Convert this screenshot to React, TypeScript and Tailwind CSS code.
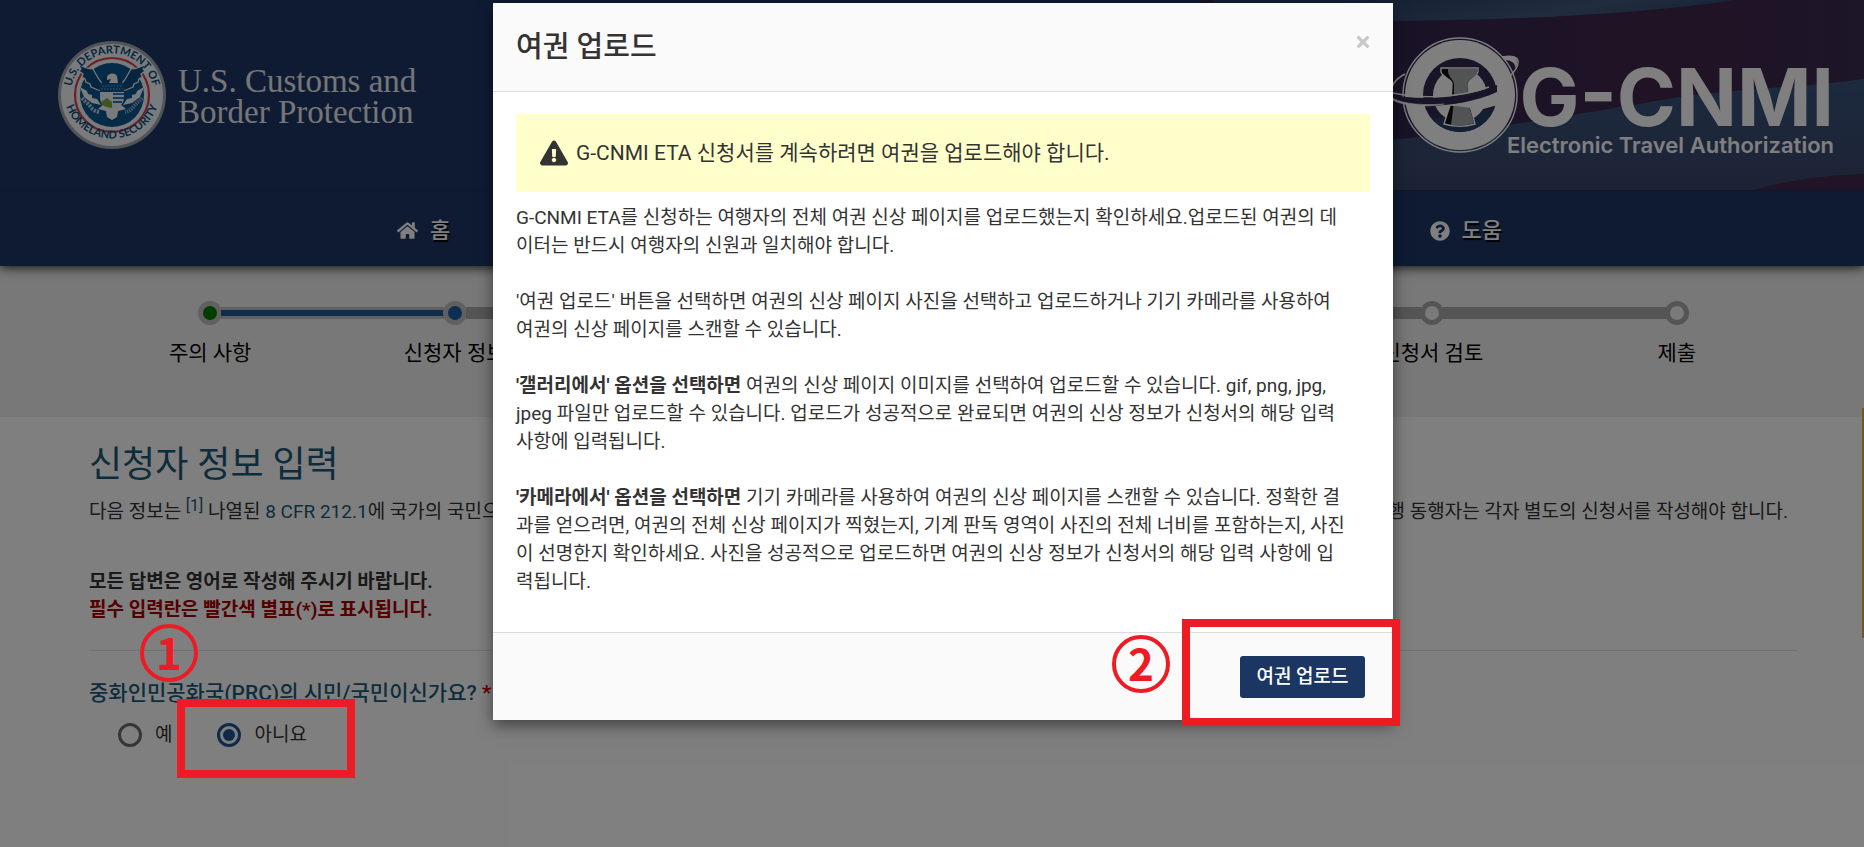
import { FC, ReactNode } from 'react'
import { FaExclamationTriangle, FaHome, FaQuestionCircle, FaTimes } from 'react-icons/fa'

const steps = [
  { label: '주의 사항', state: 'done' },
  { label: '신청자 정보', state: 'current' },
  { label: '', state: 'todo' },
  { label: '', state: 'todo' },
  { label: '', state: 'todo' },
  { label: '신청서 검토', state: 'todo' },
  { label: '제출', state: 'todo' },
]

const dotColor: Record<string, string> = {
  done: 'border-[#c0c0c0] bg-[#007c00]',
  current: 'border-[#c0c0c0] bg-[#1c5fa6]',
  todo: 'border-[#aaaaaa] bg-[#f4f4f4]',
}

const Seal: FC = () => (
  <svg viewBox="0 0 108 108" className="size-[108px] shrink-0" role="img" aria-label="Department of Homeland Security">
    <defs>
      <path id="sealTop" d="M13.5 63A41.5 41.5 0 1 1 94.5 63" />
      <path id="sealBottom" d="M5.5 49a48.5 48.5 0 0 0 97 0" />
    </defs>
    <circle cx="54" cy="54" r="54" fill="#a3a9b2" />
    <circle cx="54" cy="54" r="51" fill="#f4f6f8" />
    <circle cx="54" cy="54" r="37" fill="#f4f6f8" stroke="#d8404c" strokeWidth="2.2" />
    <circle cx="54" cy="54" r="32" fill="#0a5690" />
    {/* tail and laurel */}
    <path d="M22 46l7 4 1 3 4 1 0 3 5 1 4 6-9-2-8-6zM86 46l-7 4-1 3-4 1 0 3-5 1-4 6 9-2 8-6z" fill="#f4f6f8" />
    <path d="M24 57c3 4 6 5 8 8s4 5 9 6" fill="none" stroke="#b9cfe0" strokeWidth="4" strokeDasharray="2.2 1.2" />
    <path d="M84 57c-3 4-6 5-8 8s-4 5-9 6" fill="none" stroke="#8fb0ca" strokeWidth="4" strokeDasharray="1.4 1" />
    <path d="M40 68l14-12 14 12-8 2-1 6-5 3-5-3-1-6z" fill="#f4f6f8" />
    {/* eagle wings */}
    <path
      d="M20 23c5 3 10 5 15 5 3 5 5 10 8 13l3 9-6-1-7-3-1-3-4-2-1-3-3-2 1-3-4-3 2-2z M88 23c-5 3-10 5-15 5-3 5-5 10-8 13l-3 9 6-1 7-3 1-3 4-2 1-3 3-2-1-3 4-3-2-2z"
      fill="#0a4a80"
      stroke="#f4f6f8"
      strokeWidth="1.2"
    />
    <path d="M42 50l4-14h16l4 14z" fill="#0a4a80" />
    <path d="M49 37c0-5 8-6 10-2l1 7h-9l2-4-4 1z" fill="#f4f6f8" />
    {/* shield */}
    <path d="M42 48h24v8c0 7-5 11-12 13-7-2-12-6-12-13z" fill="#eef3f7" />
    <path d="M42 42h24v9H42z" fill="#0a5690" />
    <path d="M44 45h20M43 48h22" stroke="#7fa9ca" strokeWidth="1.2" strokeDasharray="1.5 1.5" />
    <path d="M55 53h11M55 57h11M55 61h9" stroke="#2b79b4" strokeWidth="2" />
    <path d="M43 61l6-4 5 4v6c-6-1-10-2-11-6z" fill="#7fa83c" />
    <g fill="#0c4f80" fontFamily="Lato, sans-serif" fontWeight="700" fontSize="11" textAnchor="middle">
      <text>
        <textPath href="#sealTop" startOffset="50%">
          U.S. DEPARTMENT OF
        </textPath>
      </text>
      <text>
        <textPath href="#sealBottom" startOffset="50%">
          HOMELAND SECURITY
        </textPath>
      </text>
    </g>
  </svg>
)

const LatteLogo: FC = () => (
  <svg viewBox="0 0 136 116" className="h-[116px] w-[136px] shrink-0" aria-hidden="true">
    {/* orbit behind the globe */}
    <path d="M115 20c10-2 17 0 16 6 0 5-4 9-8 13" fill="none" stroke="#fff" strokeWidth="1.4" />
    <path d="M115 20c9-2 16-1 15 7 0 2-1 3-2 4 1-5-4-8-11-8z" fill="#fff" />
    <path d="M18 37C8 42 2 51 4 58" fill="none" stroke="#fff" strokeWidth="1.8" />
    <circle cx="73" cy="58" r="57" fill="none" stroke="#fff" strokeWidth="1.4" />
    <circle cx="73" cy="58" r="55" fill="#fff" />
    <circle cx="73" cy="58" r="37" fill="#33284f" />
    <path d="M45 82c16-2 40-8 61-10-5 14-18 23-33 23-11 0-21-5-28-13z" fill="#264168" />
    <circle cx="73" cy="58" r="27" fill="#fff" />
    {/* latte stone */}
    <path d="M54 31h37v4c-2 6-9 7-10 12l1 18 6 22c-10 3-20 3-31 0l7-22 1-18c0-5-9-6-11-12z" fill="#111" stroke="#fff" strokeWidth="1.4" />
    <path d="M61 32h29v4c-2 5-9 6-10 11l1 18 6 21c-8 3-16 3-23 2l3-23V47c0-4-7-8-6-15z" fill="#a4a7aa" />
    {/* crossbar and ring in front */}
    <path d="M58 66c20 0 38-4 52-12l1 14-15 4c-13 0-24-4-38-3z" fill="#fff" />
    <path d="M3 57c24 7 74 5 107-9v7C76 70 30 73 4 62z" fill="#33284f" />
    <path d="M6 56c26 6 66 5 96-6" fill="none" stroke="#fff" strokeWidth="1.4" />
    <path d="M1 57c6 9 30 12 56 10-20 4-48 2-56-8z" fill="#fff" stroke="#fff" strokeWidth="0.6" />
  </svg>
)

const FlagBackdrop: FC = () => (
  <svg viewBox="0 0 664 190" preserveAspectRatio="none" className="absolute right-0 top-0 h-full w-[664px]" aria-hidden="true">
    <defs>
      <linearGradient id="wave" x1="0" y1="0" x2="1" y2="0.2">
        <stop offset="0.25" stopColor="#2a3f66" />
        <stop offset="0.75" stopColor="#42597c" />
        <stop offset="1" stopColor="#304a72" />
      </linearGradient>
      <linearGradient id="stripe" x1="0" y1="0" x2="1" y2="0">
        <stop offset="0.3" stopColor="#33264f" />
        <stop offset="0.7" stopColor="#42264b" />
        <stop offset="1" stopColor="#3a2b50" />
      </linearGradient>
      <linearGradient id="fold" x1="0" y1="0" x2="0" y2="1">
        <stop offset="0" stopColor="#38557e" />
        <stop offset="1" stopColor="#3b466a" />
      </linearGradient>
    </defs>
    <path d="M0 0h664v190H0z" fill="url(#stripe)" />
    <path d="M12 0h523C440 14 320 20 193 21L20 14z" fill="url(#wave)" />
    <path d="M664 79C600 88 540 88 480 97c-60 10-170 30-287 43v50h471z" fill="url(#fold)" />
    <path d="M664 174c-40 1-80 7-110 16h110z" fill="#42284c" />
  </svg>
)

const Header: FC = () => (
  <header className="relative z-10 bg-[#1d3766] text-white shadow-[0_2px_10px_rgba(0,0,0,0.8)]">
    <div className="relative flex h-[191px] items-center justify-between border-b border-[#1a315c] pl-[58px] pr-[30px]">
      <FlagBackdrop />
      <a href="#" className="relative flex items-center gap-3">
        <Seal />
        <span className="flex flex-col pt-1 font-['Liberation_Serif',serif] text-[33px] leading-[31px] text-[#e9ecf1]">
          <span>U.S. Customs and</span>
          <span>Border Protection</span>
        </span>
      </a>
      <a href="#" className="relative flex items-center">
        <LatteLogo />
        <span className="-ml-4 flex flex-col items-end pt-7 font-[Inter,sans-serif]">
          <span className="text-[80px] font-bold leading-[72px]">G-CNMI</span>
          <span className="text-[22px] font-semibold leading-6">Electronic Travel Authorization</span>
        </span>
      </a>
    </div>
    <nav className="flex h-[75px] items-center justify-between pl-[397px] pr-[362px] pt-1 text-[22px] font-medium [text-shadow:1px_2px_1px_#000]">
      <a href="#" className="flex items-center gap-3">
        <FaHome className="size-[21px]" />홈
      </a>
      <a href="#" className="flex items-center gap-3">
        <FaQuestionCircle className="size-5" />
        도움
      </a>
    </nav>
  </header>
)

const Stepper: FC = () => (
  <ol className="grid h-[151px] grid-cols-7 bg-[#f0f0f0] pl-[88px] pr-[65px] pt-[35px]">
    {steps.map((step, i) => (
      <li key={i} className="flex flex-col items-center gap-3">
        <div className="flex w-full items-center">
          <div className={i === 0 ? 'h-3 flex-1' : i === 1 ? 'h-3 flex-1 border-y-[3px] border-[#c0c0c0] bg-[#1f5c9c]' : 'h-3 flex-1 bg-[#aaaaaa]'} />
          <div className={`-mx-px size-6 rounded-full border-[5px] ${dotColor[step.state]}`} />
          <div className={i === 6 ? 'h-3 flex-1' : i === 0 ? 'h-3 flex-1 border-y-[3px] border-[#c0c0c0] bg-[#1f5c9c]' : 'h-3 flex-1 bg-[#aaaaaa]'} />
        </div>
        <span className="text-[21px] leading-8 text-black">{step.label}</span>
      </li>
    ))}
  </ol>
)

interface RadioProps {
  label: string
  checked?: boolean
}

const Radio: FC<RadioProps> = ({ label, checked }) => (
  <label className="flex items-center gap-[13px]">
    <input
      type="radio"
      name="prc"
      defaultChecked={checked}
      className="size-6 appearance-none rounded-full border-[3px] border-[#6c6c6c] bg-clip-content p-[3px] checked:border-[#205493] checked:bg-[#205493]"
    />
    {label}
  </label>
)

const ApplicantForm: FC = () => (
  <main className="flex flex-col pl-[89px] pr-[66px] pt-[23px] text-[19px] leading-7 text-[#333]">
    <h1 className="text-[36px] leading-[50px] text-[#1b5b78]">신청자 정보 입력</h1>
    <p className="mt-2 flex justify-between whitespace-nowrap pr-[10px]">
      <span>
        다음 정보는{' '}
        <a href="#" className="align-super text-[16px] leading-none text-[#1b5b78]">
          [1]
        </a>{' '}
        나열된{' '}
        <a href="#" className="text-[#1b5b78]">
          8 CFR 212.1
        </a>
        에 국가의 국민으로
      </span>
      <span>여행 동행자는 각자 별도의 신청서를 작성해야 합니다.</span>
    </p>
    <p className="mt-[42px] font-bold">
      모든 답변은 영어로 작성해 주시기 바랍니다.
      <br />
      <span className="text-[#a80000]">필수 입력란은 빨간색 별표(*)로 표시됩니다.</span>
    </p>
    <hr className="mt-[26px] border-[#e4e4e4]" />
    <fieldset className="mt-7">
      <legend className="text-[21px] font-medium text-[#1b5b78]">
        중화인민공화국(PRC)의 시민/국민이신가요? <span className="text-[#d00000]">*</span>
      </legend>
      <div className="mt-[14px] flex gap-[45px] pl-[29px]">
        <Radio label="예" />
        <Radio label="아니요" checked />
      </div>
    </fieldset>
  </main>
)

const UploadDialog: FC = () => (
  <section
    role="dialog"
    aria-labelledby="uploadTitle"
    className="flex w-[900px] flex-col bg-white text-[19px] leading-7 text-[#333] shadow-[0_5px_15px_rgba(0,0,0,0.5)]"
  >
    <div className="flex h-[89px] items-start justify-between border-b border-[#dcdcdc] bg-[#fafafa] pl-[23px] pr-[21px]">
      <h2 id="uploadTitle" className="mt-6 text-[29px] font-medium leading-10">
        여권 업로드
      </h2>
      <button type="button" aria-label="닫기" className="mt-[30px] text-[#c8c8c8]">
        <FaTimes className="size-[18px]" />
      </button>
    </div>
    <div className="flex flex-col px-[23px] pb-9 pt-[22px]">
      <div className="flex h-[78px] items-center gap-2 bg-[#ffffcc] px-6 text-[21px]">
        <FaExclamationTriangle className="size-[28px]" />
        G-CNMI ETA 신청서를 계속하려면 여권을 업로드해야 합니다.
      </div>
      <div className="mt-3 flex flex-col gap-7 whitespace-nowrap">
        <p>
          G-CNMI ETA를 신청하는 여행자의 전체 여권 신상 페이지를 업로드했는지 확인하세요.업로드된 여권의 데
          <br />
          이터는 반드시 여행자의 신원과 일치해야 합니다.
        </p>
        <p>
          '여권 업로드' 버튼을 선택하면 여권의 신상 페이지 사진을 선택하고 업로드하거나 기기 카메라를 사용하여
          <br />
          여권의 신상 페이지를 스캔할 수 있습니다.
        </p>
        <p>
          <b>'갤러리에서' 옵션을 선택하면</b> 여권의 신상 페이지 이미지를 선택하여 업로드할 수 있습니다. gif, png, jpg,
          <br />
          jpeg 파일만 업로드할 수 있습니다. 업로드가 성공적으로 완료되면 여권의 신상 정보가 신청서의 해당 입력
          <br />
          사항에 입력됩니다.
        </p>
        <p>
          <b>'카메라에서' 옵션을 선택하면</b> 기기 카메라를 사용하여 여권의 신상 페이지를 스캔할 수 있습니다. 정확한 결
          <br />
          과를 얻으려면, 여권의 전체 신상 페이지가 찍혔는지, 기계 판독 영역이 사진의 전체 너비를 포함하는지, 사진
          <br />
          이 선명한지 확인하세요. 사진을 성공적으로 업로드하면 여권의 신상 정보가 신청서의 해당 입력 사항에 입
          <br />
          력됩니다.
        </p>
      </div>
    </div>
    <div className="flex h-[88px] items-center justify-end border-t border-[#dcdcdc] bg-[#fafafa] pr-7">
      <button type="button" className="h-[42px] w-[125px] rounded-[3px] bg-[#1c3664] font-medium text-white">
        여권 업로드
      </button>
    </div>
  </section>
)

const Marker: FC<{ children: ReactNode }> = ({ children }) => (
  <span className="flex size-[58px] items-center justify-center rounded-full border-4 border-[#ed1c24] pb-1 font-['Noto_Sans_CJK_KR',sans-serif] text-[44px] font-bold leading-none text-[#ed1c24]">
    {children}
  </span>
)

export default function App() {
  return (
    <div className="relative min-h-screen overflow-hidden bg-white font-[Roboto,'Noto_Sans_CJK_KR',sans-serif]">
      <Header />
      <Stepper />
      <ApplicantForm />
      <div className="absolute right-0 top-[408px] h-[230px] w-[2px] bg-[#e0b040]" />

      <div className="absolute inset-0 z-20 flex items-start justify-center bg-black/50 pl-[22px] pt-[3px]">
        <UploadDialog />
      </div>

      {/* guide marks */}
      <div className="absolute left-[140px] top-[624px] z-30">
        <Marker>1</Marker>
      </div>
      <div className="absolute left-[177px] top-[699px] z-30 h-[79px] w-[178px] border-8 border-[#ed1c24]" />
      <div className="absolute left-[1112px] top-[635px] z-30">
        <Marker>2</Marker>
      </div>
      <div className="absolute left-[1182px] top-[619px] z-30 h-[107px] w-[218px] border-8 border-[#ed1c24]" />
    </div>
  )
}
